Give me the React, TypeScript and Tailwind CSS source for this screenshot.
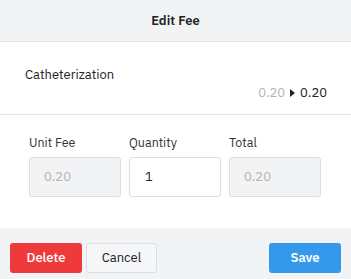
import React from "react";

export default function App() {
  const font = { fontFamily: '"IBM Plex Sans", Inter, "Noto Sans", sans-serif' };
  return (
    <div className="w-[351px] h-[279px] bg-white flex flex-col text-[#222]" style={font}>
      <div className="h-[42px] shrink-0 bg-[#f2f3f4] border-b border-[#e2e3e5] flex items-center justify-center">
        <span className="text-[13px] font-semibold text-[#222]">Edit Fee</span>
      </div>
      <div className="h-[73px] shrink-0 border-b border-[#e4e5e7] pt-[24px] pl-[25px] pr-[24px] flex flex-col">
        <div className="text-[13px] leading-[18px]">Catheterization</div>
        <div className="text-[13px] leading-[18px] flex justify-end items-center gap-[5px]">
          <span className="text-[#b4b5b7]">0.20</span>
          <svg width="5" height="8" viewBox="0 0 5 8"><path d="M0 0 L5 4 L0 8 Z" fill="#222" /></svg>
          <span>0.20</span>
        </div>
      </div>
      <div className="flex-1 pt-[18px] pl-[29px] pr-[30px]">
        <div className="grid grid-cols-3 gap-x-[8px]">
          <div className="flex flex-col gap-[6px]">
            <span className="text-[12.5px] leading-[18px] text-[#333]">Unit Fee</span>
            <div className="h-[40px] rounded-[3px] border border-[#dcdde0] bg-[#f2f3f4] flex items-center px-[14px] text-[13px] text-[#b4b5b7]">0.20</div>
          </div>
          <div className="flex flex-col gap-[6px]">
            <span className="text-[12.5px] leading-[18px] text-[#333]">Quantity</span>
            <div className="h-[40px] rounded-[3px] border border-[#dcdde0] bg-white flex items-center px-[15px] text-[13px] text-[#222]">1</div>
          </div>
          <div className="flex flex-col gap-[6px]">
            <span className="text-[12.5px] leading-[18px] text-[#333]">Total</span>
            <div className="h-[40px] rounded-[3px] border border-[#dcdde0] bg-[#f2f3f4] flex items-center px-[14px] text-[13px] text-[#b4b5b7]">0.20</div>
          </div>
        </div>
      </div>
      <div className="h-[51px] shrink-0 bg-[#f2f3f4] flex items-start pt-[15px] px-[10px]">
        <button className="w-[72px] h-[30px] rounded-[3px] bg-[#ef3a3c] text-white text-[13px] font-medium">Delete</button>
        <button className="ml-[4px] w-[71px] h-[30px] rounded-[3px] bg-[#f5f6f7] border border-[#dcdde0] text-[#222] text-[13px]">Cancel</button>
        <button className="ml-auto w-[72px] h-[30px] rounded-[3px] bg-[#3499ea] text-white text-[13px] font-semibold">Save</button>
      </div>
    </div>
  );
}
